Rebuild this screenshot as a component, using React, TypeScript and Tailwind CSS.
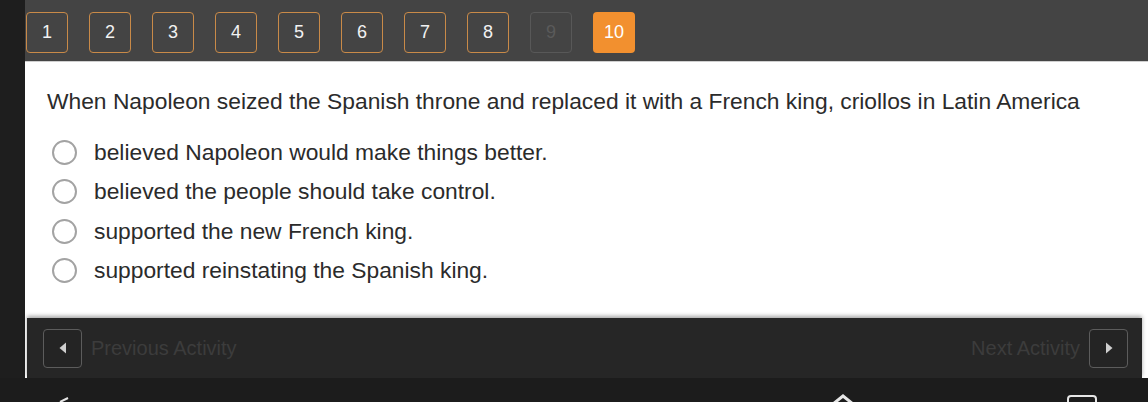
import React from 'react';

const FONT = { fontFamily: '"Liberation Sans", Arial, sans-serif' };

const pages = [1, 2, 3, 4, 5, 6, 7, 8, 9, 10];
const current = 10;
const disabled = 9;

const options = [
  'believed Napoleon would make things better.',
  'believed the people should take control.',
  'supported the new French king.',
  'supported reinstating the Spanish king.',
];

function PageButton({ n }: { n: number }) {
  if (n === current) {
    return (
      <div className="w-[42px] h-[41px] rounded-[4px] bg-[#f2902f] text-white flex items-center justify-center text-[18px]">
        {n}
      </div>
    );
  }
  if (n === disabled) {
    return (
      <div className="w-[42px] h-[41px] rounded-[4px] border-[1.5px] border-[#585858] text-[#5a5a5a] flex items-center justify-center text-[18px]">
        {n}
      </div>
    );
  }
  return (
    <div className="w-[42px] h-[41px] rounded-[4px] border-[1.5px] border-[#c98a48] text-[#f2f2f2] flex items-center justify-center text-[18px]">
      {n}
    </div>
  );
}

function NavButton({ dir }: { dir: 'left' | 'right' }) {
  return (
    <div className="w-[39px] h-[39px] rounded-[4px] border-[1.5px] border-[#5c5c5c] bg-[#242424] flex items-center justify-center">
      <svg width="10" height="12" viewBox="0 0 10 12">
        {dir === 'left' ? (
          <polygon points="8,0.5 8,11.5 1.5,6" fill="#cfcfcf" />
        ) : (
          <polygon points="2,0.5 2,11.5 8.5,6" fill="#cfcfcf" />
        )}
      </svg>
    </div>
  );
}

export default function App() {
  return (
    <div className="w-[1148px] h-[402px] bg-[#1e1e1e] overflow-hidden flex flex-col" style={FONT}>
      <div className="flex h-[378px]">
        {/* left strip */}
        <div className="w-[25px] bg-[#1e1e1e]" />

        <div className="flex-1 flex flex-col bg-white">
          {/* page buttons */}
          <div className="h-[62px] bg-[#444444] border-b border-[#cfcfcf] flex items-start pt-[12px] pl-[1px] gap-[21px]">
            {pages.map((n) => (
              <PageButton key={n} n={n} />
            ))}
          </div>

          {/* question */}
          <div className="flex-1 pl-[22px] pt-[25px]">
            <p className="text-[22.8px] text-[#2b2b2b] leading-[28px] whitespace-nowrap">
              When Napoleon seized the Spanish throne and replaced it with a French king, criollos in Latin America
            </p>
            <div className="mt-[24px] flex flex-col gap-[13.5px] pl-[5px]">
              {options.map((o) => (
                <div key={o} className="flex items-center h-[26px]">
                  <div className="w-[25px] h-[25px] rounded-full border-[2px] border-[#a3a3a3] bg-white" />
                  <span className="ml-[17px] text-[22.8px] text-[#2b2b2b] whitespace-nowrap">{o}</span>
                </div>
              ))}
            </div>
          </div>

          {/* footer */}
          <div className="h-[62px] pl-[2px] pr-[6px] pt-[2px] bg-white">
            <div className="h-[60px] bg-[#262626] shadow-[0_-2px_4px_rgba(0,0,0,0.35)] flex items-center justify-between pl-[16px] pr-[14px]">
              <div className="flex items-center gap-[9px]">
                <NavButton dir="left" />
                <span className="text-[20px] text-[#3c3c3c]">Previous Activity</span>
              </div>
              <div className="flex items-center gap-[9px]">
                <span className="text-[20px] text-[#3c3c3c]">Next Activity</span>
                <NavButton dir="right" />
              </div>
            </div>
          </div>
        </div>
      </div>

      {/* system nav bar */}
      <div className="h-[24px] bg-[#1c1c1c] relative">
        <svg className="absolute left-0 top-0" width="1148" height="24" viewBox="0 0 1148 24">
          <path d="M60 24 L68 20" stroke="#e6e6e6" strokeWidth="2" fill="none" />
          <path d="M833 26 L843 18 L853 26" stroke="#e6e6e6" strokeWidth="3" fill="none" />
          <rect x="1068" y="18" width="28" height="14" rx="3" stroke="#e6e6e6" strokeWidth="2" fill="none" />
        </svg>
      </div>
    </div>
  );
}
